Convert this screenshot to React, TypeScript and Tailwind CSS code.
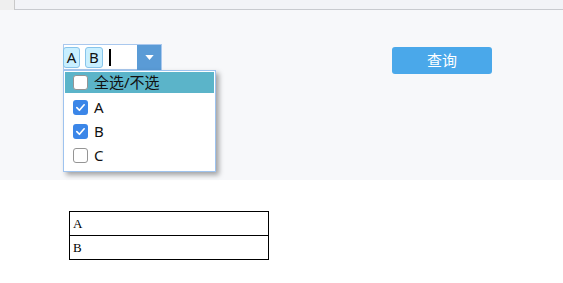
import React from 'react'

const items = [
    { label: 'A', checked: true },
    { label: 'B', checked: true },
    { label: 'C', checked: false },
]

const Box = ({ checked }: { checked: boolean }) => (
    checked ? (
        <span className="flex h-[15px] w-[15px] shrink-0 items-center justify-center rounded-[3px] bg-[#3b86e8]">
            <svg viewBox="0 0 12 12" className="h-[11px] w-[11px]">
                <path d="M2 6.2 L4.8 9 L10 3" fill="none" stroke="white" strokeWidth="1.8" strokeLinecap="round" strokeLinejoin="round" />
            </svg>
        </span>
    ) : (
        <span className="h-[15px] w-[15px] shrink-0 rounded-[3px] border border-[#959595] bg-white" />
    )
)

export default function App() {
    const sans = { fontFamily: '"Noto Sans", "Noto Sans CJK SC", sans-serif' }
    return (
        <div className="h-[283px] w-[563px] overflow-hidden bg-white" style={sans}>
            {/* top strip */}
            <div className="flex h-[10px]">
                <div className="w-[15px] border-r border-[#c9c9c9] bg-[#efefef]" />
                <div className="flex-1 border-b border-[#c8cacf] bg-[#f2f3f7]" />
            </div>

            {/* search panel */}
            <div className="flex h-[170px] items-start bg-[#f7f8fa] pl-[63px] pt-[34px]">
                <div className="relative">
                    <div className="flex h-[26px] w-[99px] items-center border border-[#a9c8ee] bg-white">
                        <span className="ml-[-1px] flex h-[21px] w-[17px] items-center justify-center rounded-[3px] border border-[#88c4ea] bg-[#c8efff] text-[15px] leading-none text-[#111]">A</span>
                        <span className="ml-[5px] flex h-[21px] w-[18px] items-center justify-center rounded-[3px] border border-[#88c4ea] bg-[#c8efff] text-[15px] leading-none text-[#111]">B</span>
                        <span className="ml-[6px] h-[17px] w-[2px] bg-black" />
                        <span className="flex-1" />
                        <span className="flex h-[25px] w-[24px] items-center justify-center bg-[#5a9bd6]">
                            <svg viewBox="0 0 10 6" className="h-[5px] w-[9px]">
                                <path d="M0 0 H10 L5 6 Z" fill="white" />
                            </svg>
                        </span>
                    </div>

                    {/* dropdown */}
                    <div className="absolute left-0 top-[26px] z-10 w-[153px] border border-[#9ec3ef] bg-white px-[1px] pb-[5px] pt-[1px] shadow-[3px_3px_5px_rgba(0,0,0,0.35)]">
                        <div className="mb-[4px] flex h-[21px] items-center gap-[6px] bg-[#5bb4c9] pl-[8px] text-[15px] text-[#111]">
                            <Box checked={false} />
                            <span>全选/不选</span>
                        </div>
                        {items.map((item, i) => (
                            <div key={item.label} className={`flex h-[21px] items-center gap-[6px] pl-[8px] text-[15px] text-[#111] ${i < items.length - 1 ? 'mb-[3px]' : ''}`}>
                                <Box checked={item.checked} />
                                <span>{item.label}</span>
                            </div>
                        ))}
                    </div>
                </div>

                <button className="ml-[230px] mt-[3px] h-[27px] w-[100px] rounded-[3px] bg-[#4aa8ea] text-[15px] text-white">
                    查询
                </button>
            </div>

            {/* result table */}
            <div className="pl-[69px] pt-[31px]">
                <table className="w-[200px] border-collapse" style={{ fontFamily: '"Liberation Serif", serif' }}>
                    <tbody>
                        <tr>
                            <td className="h-[24px] border border-black px-[3px] text-[13px] text-black">A</td>
                        </tr>
                        <tr>
                            <td className="h-[24px] border border-black px-[3px] text-[13px] text-black">B</td>
                        </tr>
                    </tbody>
                </table>
            </div>
        </div>
    )
}
